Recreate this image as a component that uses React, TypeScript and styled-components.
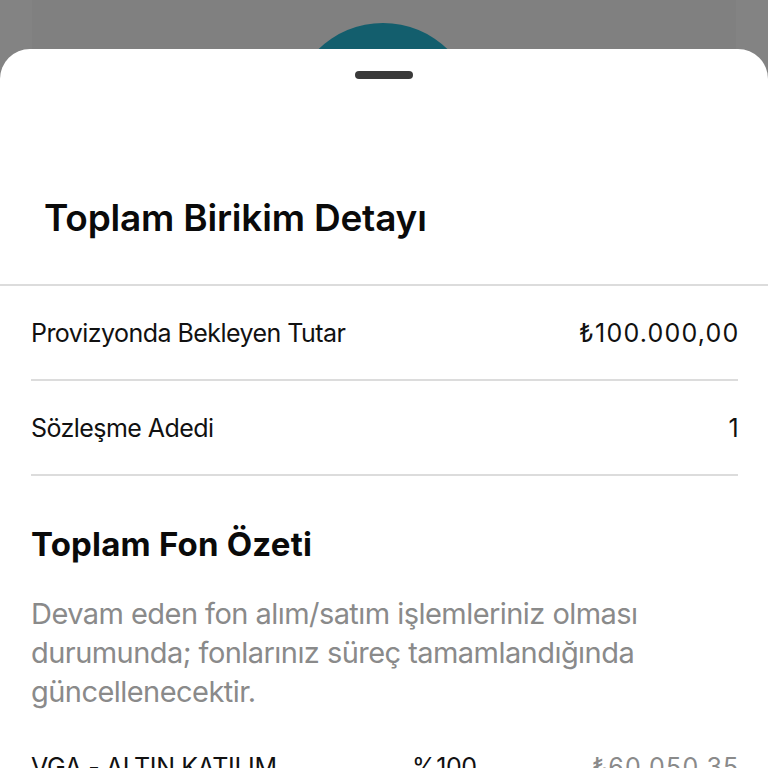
import React from "react";
import styled, { createGlobalStyle } from "styled-components";

const Global = createGlobalStyle`
  html, body { margin: 0; padding: 0; }
  body {
    width: 768px;
    height: 768px;
    overflow: hidden;
    font-family: Inter, Roboto, "Liberation Sans", sans-serif;
    background: #808080;
  }
`;

const Backdrop = styled.div`
  position: relative;
  width: 768px;
  height: 768px;
  background: #808080;
  overflow: hidden;
  padding-top: 49px;
  box-sizing: border-box;
`;

const Strip = styled.div<{ $side: "left" | "right" }>`
  position: absolute;
  top: 0;
  bottom: 0;
  width: 32px;
  ${(p) => (p.$side === "left" ? "left: 0;" : "right: 0;")}
  background: #838383;
`;

const Avatar = styled.div`
  position: absolute;
  left: 290px;
  top: 23px;
  width: 186px;
  height: 186px;
  border-radius: 50%;
  background: #135e6d;
`;

const Sheet = styled.div`
  position: relative;
  background: #fff;
  border-radius: 30px 30px 0 0;
  min-height: 719px;
  display: flex;
  flex-direction: column;
`;

const Handle = styled.div`
  align-self: center;
  width: 58px;
  height: 8px;
  border-radius: 4px;
  background: #3a3a3a;
  margin-top: 22px;
`;

const Title = styled.h1`
  margin: 117px 0 0 44px;
  font-size: 37px;
  line-height: 44px;
  font-weight: 600;
  color: #0a0a0a;
  letter-spacing: -0.2px;
`;

const HeaderDivider = styled.div`
  margin-top: 44px;
  height: 2px;
  background: #dcdcdc;
`;

const Content = styled.div`
  padding: 0 30px 0 31px;
  display: flex;
  flex-direction: column;
`;

const Row = styled.div`
  display: flex;
  align-items: center;
  justify-content: space-between;
  height: 93px;
  border-bottom: 2px solid #dcdcdc;
  font-size: 25px;
  color: #111;
  letter-spacing: -0.55px;
`;

const Amount = styled.span<{ $muted?: boolean }>`
  letter-spacing: 1.2px;
  margin-right: -1.5px;
  color: ${(p) => (p.$muted ? "#8a8a8a" : "inherit")};
`;

const SectionTitle = styled.h2`
  margin: 48px 0 0 0;
  font-size: 33px;
  line-height: 40px;
  font-weight: 700;
  color: #0a0a0a;
  letter-spacing: 0.2px;
`;

const Note = styled.p`
  margin: 30px 0 0 0;
  max-width: 640px;
  font-size: 29px;
  line-height: 39px;
  color: #8a8a8a;
  letter-spacing: -0.55px;
`;

const FundRow = styled.div`
  display: grid;
  grid-template-columns: 381px 1fr auto;
  margin-top: 41px;
  font-size: 25px;
  line-height: 30px;
  color: #111;
  letter-spacing: -0.4px;
`;

export default function App() {
  return (
    <>
      <Global />
      <Backdrop>
        <Strip $side="left" />
        <Strip $side="right" />
        <Avatar />
        <Sheet>
          <Handle />
          <Title>Toplam Birikim Detayı</Title>
          <HeaderDivider />
          <Content>
            <Row>
              <span>Provizyonda Bekleyen Tutar</span>
              <Amount>₺100.000,00</Amount>
            </Row>
            <Row>
              <span>Sözleşme Adedi</span>
              <span>1</span>
            </Row>
            <SectionTitle>Toplam Fon Özeti</SectionTitle>
            <Note>
              Devam eden fon alım/satım işlemleriniz olması durumunda; fonlarınız süreç tamamlandığında güncellenecektir.
            </Note>
            <FundRow>
              <span>VGA - ALTIN KATILIM</span>
              <span>%100</span>
              <Amount $muted>₺60.050,35</Amount>
            </FundRow>
          </Content>
        </Sheet>
      </Backdrop>
    </>
  );
}
